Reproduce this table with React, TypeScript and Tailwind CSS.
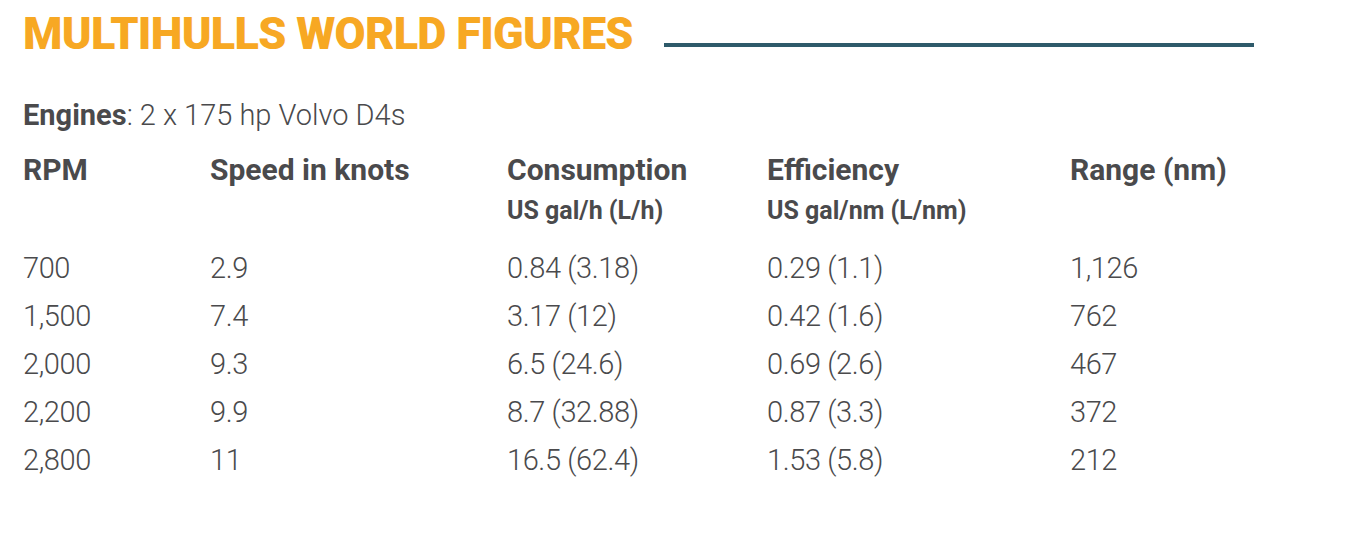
import React from "react";

const rows = [
  ["700", "2.9", "0.84 (3.18)", "0.29 (1.1)", "1,126"],
  ["1,500", "7.4", "3.17 (12)", "0.42 (1.6)", "762"],
  ["2,000", "9.3", "6.5 (24.6)", "0.69 (2.6)", "467"],
  ["2,200", "9.9", "8.7 (32.88)", "0.87 (3.3)", "372"],
  ["2,800", "11", "16.5 (62.4)", "1.53 (5.8)", "212"],
];

const headers: { title: string; sub?: string }[] = [
  { title: "RPM" },
  { title: "Speed in knots" },
  { title: "Consumption", sub: "US gal/h (L/h)" },
  { title: "Efficiency", sub: "US gal/nm (L/nm)" },
  { title: "Range (nm)" },
];

const cols = "grid grid-cols-[187px_297px_260px_303px_1fr]";

export default function App() {
  return (
    <div className="w-[1347px] h-[539px] bg-white pl-[23px] text-[#4a4a4c] font-['Roboto',sans-serif] overflow-hidden">
      {/* Title + rule */}
      <div className="flex items-end gap-[31px] pt-[10px]">
        <h1 className="text-[45px] leading-[48px] font-black tracking-[-0.7px] text-[#f7a823] whitespace-nowrap">
          MULTIHULLS WORLD FIGURES
        </h1>
        <div className="w-[590px] h-[4px] bg-[#2e5a6a] mb-[11px]" />
      </div>

      {/* Engines */}
      <p className="mt-[39px] text-[29px] leading-[36px] font-light">
        <span className="font-bold">Engines</span>: 2 x 175 hp Volvo D4s
      </p>

      {/* Header row */}
      <div className={`${cols} mt-[19px]`}>
        {headers.map((h) => (
          <div key={h.title}>
            <div className="text-[30px] leading-[36px] font-bold">{h.title}</div>
            {h.sub && (
              <div className="text-[25px] leading-[34px] font-bold mt-[6px]">{h.sub}</div>
            )}
          </div>
        ))}
      </div>

      {/* Data rows */}
      <div className="mt-[16px]">
        {rows.map((r) => (
          <div key={r[0]} className={cols}>
            {r.map((c, i) => (
              <div key={i} className="text-[29px] leading-[48px] font-light tracking-[-0.4px]">
                {c}
              </div>
            ))}
          </div>
        ))}
      </div>
    </div>
  );
}
